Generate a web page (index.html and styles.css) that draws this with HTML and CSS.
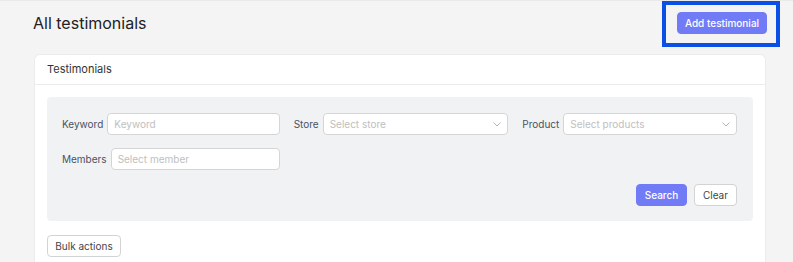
FILE: index.html
```html
<!DOCTYPE html>
<html lang="en">
<head>
    <meta charset="UTF-8">
    <meta name="viewport" content="width=device-width, initial-scale=1.0">
    <title>All testimonials</title>
    <link rel="stylesheet" href="styles.css">
</head>
<body>

<div class="page-header">
    <h1>All testimonials</h1>
    <div class="highlight">
        <button class="btn btn-primary add-btn">Add testimonial</button>
    </div>
</div>

<div class="card">
    <div class="card-header">Testimonials</div>
    <div class="card-body">
        <div class="filters">
            <div class="filter-grid">
                <div class="field">
                    <label for="keyword">Keyword</label>
                    <input type="text" id="keyword" placeholder="Keyword">
                </div>
                <div class="field">
                    <label>Store</label>
                    <div class="select">
                        <span>Select store</span>
                        <svg width="8" height="5" viewBox="0 0 8 5"><path d="M0.5 0.5 L4 4 L7.5 0.5" fill="none" stroke="#b5b5b5" stroke-width="1"/></svg>
                    </div>
                </div>
                <div class="field">
                    <label>Product</label>
                    <div class="select">
                        <span>Select products</span>
                        <svg width="8" height="5" viewBox="0 0 8 5"><path d="M0.5 0.5 L4 4 L7.5 0.5" fill="none" stroke="#b5b5b5" stroke-width="1"/></svg>
                    </div>
                </div>
                <div class="field">
                    <label for="members">Members</label>
                    <input type="text" id="members" placeholder="Select member">
                </div>
            </div>
            <div class="filter-actions">
                <button class="btn btn-primary">Search</button>
                <button class="btn btn-light">Clear</button>
            </div>
        </div>
        <button class="btn btn-light bulk-btn">Bulk actions</button>
    </div>
</div>

</body>
</html>
```

FILE: styles.css
```css
body {
    font-family: 'Inter', 'Liberation Sans', sans-serif;
    background-color: #f4f4f4;
    margin: 0;
    border-top: 1px solid #e9e9e9;
    color: #333;
}

.page-header {
    display: flex;
    justify-content: space-between;
    align-items: flex-start;
    padding: 0 13px 0 33px;
    height: 46px;
}

h1 {
    margin: 0;
    padding-top: 12px;
    font-size: 16px;
    font-weight: 400;
    color: #222;
}

.highlight {
    border: 4px solid #0a4fe6;
    padding: 7px 9px 9px 11px;
}

.btn {
    font-family: inherit;
    font-size: 10px;
    height: 22px;
    padding: 0 8px;
    border-radius: 4px;
    cursor: pointer;
}

.btn-primary {
    background-color: #727bf6;
    border: 1px solid #727bf6;
    color: #fff;
    font-weight: 500;
}

.btn-light {
    background-color: #fff;
    border: 1px solid #d3d3d3;
    color: #444;
}

.add-btn {
    display: block;
    width: 90px;
    padding: 0;
}

.card {
    margin: 7px 27px 0 34px;
    background-color: #fff;
    border: 1px solid #ebebeb;
    border-radius: 6px;
}

.card-header {
    height: 29px;
    line-height: 29px;
    padding-left: 12px;
    font-size: 11px;
    color: #333;
    border-bottom: 1px solid #ececec;
}

.card-body {
    padding: 12px 12px;
}

.filters {
    background-color: #f1f2f4;
    border-radius: 4px;
    padding: 16px 16px 15px 15px;
}

.filter-grid {
    display: grid;
    grid-template-columns: 1fr 1fr 1fr;
    column-gap: 14px;
    row-gap: 13px;
}

.field {
    display: flex;
    align-items: center;
    gap: 4px;
}

label {
    font-size: 10px;
    color: #4a5263;
}

input, .select {
    flex: 1;
    min-width: 0;
    box-sizing: border-box;
    height: 22px;
    padding: 0 6px;
    border: 1px solid #d5d5d5;
    border-radius: 4px;
    background-color: #fff;
    font-family: inherit;
    font-size: 10px;
}

input::placeholder {
    color: #c0c0c0;
}

.select {
    display: flex;
    align-items: center;
    justify-content: space-between;
    color: #c0c0c0;
}

.filter-actions {
    display: flex;
    justify-content: flex-end;
    gap: 7px;
    margin-top: 14px;
}

.filter-actions .btn-primary {
    width: 51px;
    padding: 0;
}

.filter-actions .btn-light {
    width: 43px;
    padding: 0;
}

.bulk-btn {
    margin-top: 14px;
    width: 74px;
    padding: 0;
}
```
